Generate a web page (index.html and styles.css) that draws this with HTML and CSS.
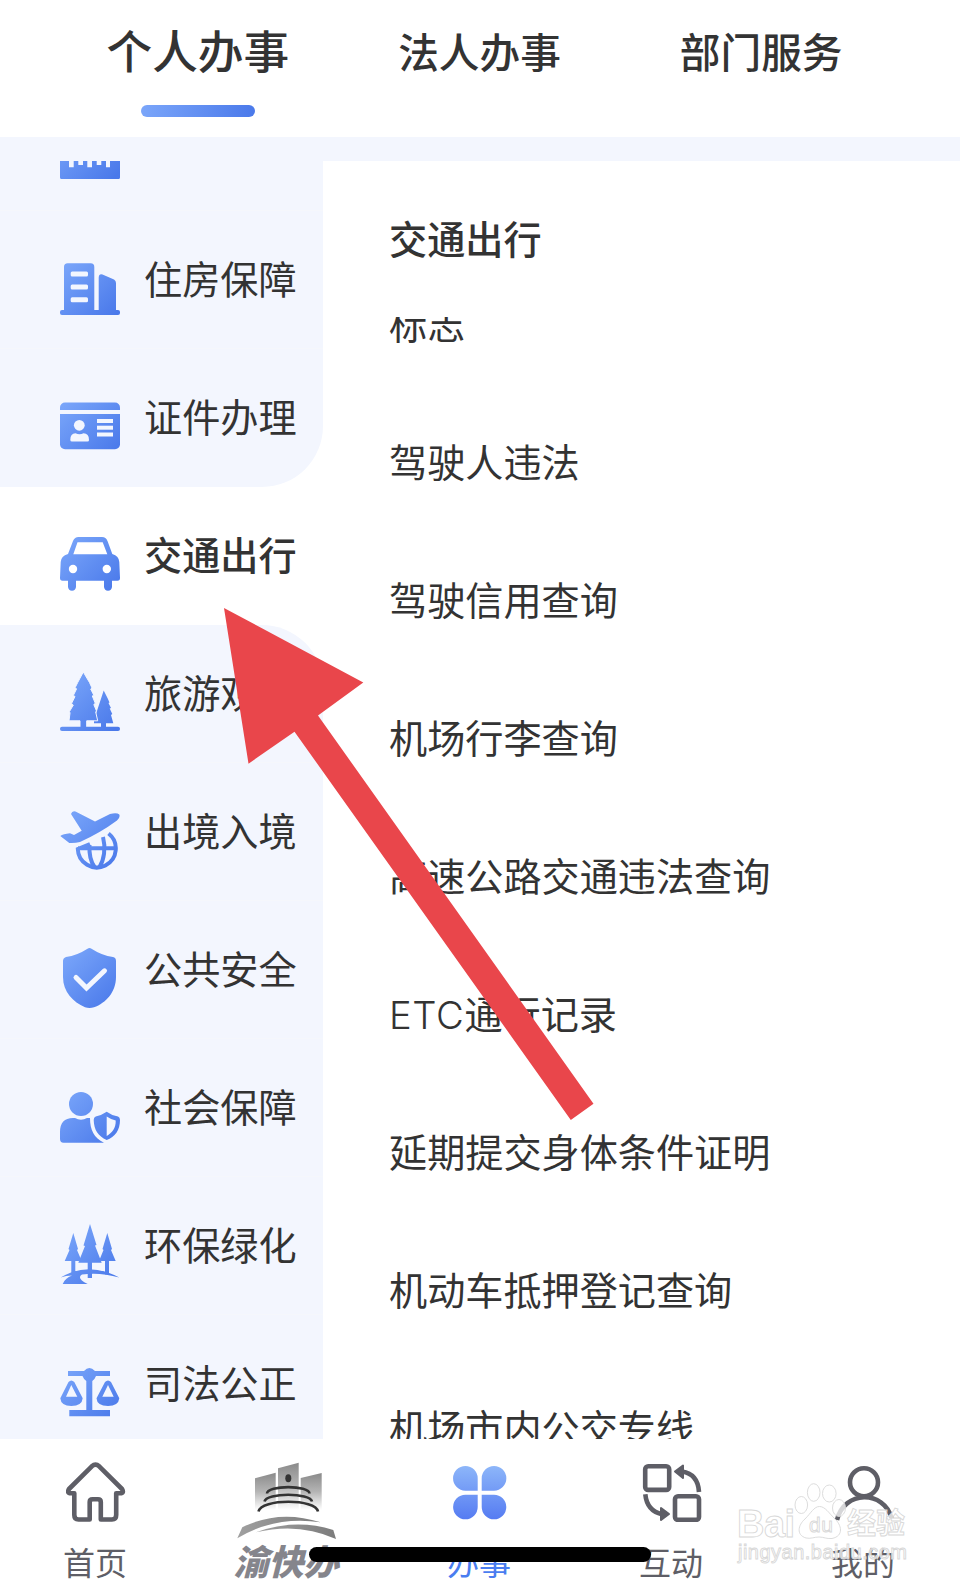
FILE: index.html
```html
<!DOCTYPE html>
<html lang="zh-CN">
<head>
    <meta charset="utf-8">
    <meta name="viewport" content="width=device-width, initial-scale=1">
    <title>办事</title>
    <link rel="stylesheet" href="styles.css">
</head>
<body>
    <svg class="defs" width="0" height="0">
        <defs>
            <linearGradient id="blue" gradientUnits="userSpaceOnUse" x1="4" y1="4" x2="56" y2="56">
                <stop offset="0" stop-color="#7aa6fa"/>
                <stop offset="1" stop-color="#4a79ea"/>
            </linearGradient>
            <linearGradient id="petal" gradientUnits="userSpaceOnUse" x1="0" y1="4" x2="0" y2="57">
                <stop offset="0" stop-color="#8db6f9"/>
                <stop offset="1" stop-color="#567cf2"/>
            </linearGradient>
            <linearGradient id="tower" x1="0" y1="0" x2="0" y2="1">
                <stop offset="0" stop-color="#8a8a8a"/>
                <stop offset="0.5" stop-color="#b4b4b4"/>
                <stop offset="1" stop-color="#ffffff"/>
            </linearGradient>
            <linearGradient id="swoosh" x1="0" y1="0" x2="1" y2="0">
                <stop offset="0" stop-color="#a0a0a0"/>
                <stop offset="1" stop-color="#7c7c7c"/>
            </linearGradient>
        </defs>
    </svg>

    <header class="tabs">
        <div class="tab active">个人办事</div>
        <div class="tab">法人办事</div>
        <div class="tab">部门服务</div>
    </header>

    <main class="main">
        <nav class="side">
            <div class="cat">
                <svg class="cat-icon" viewBox="0 0 60 60" fill="url(#blue)">
                    <path d="M0 22H60V57.500Q60 59 58.500 59H1.500Q0 59 0 57.500ZM9 30V47.300H13.700V30ZM18.300 30V45H23V30ZM27.300 30V47.300H32V30ZM36.700 30V45H41.300V30ZM46 30V47.300H50V30Z" fill-rule="evenodd"/>
                </svg>
                <span></span>
            </div>
            <div class="cat">
                <svg class="cat-icon" viewBox="0 0 60 60" fill="url(#blue)">
                    <path d="M4 52V9Q4 5.300 7.700 5.300H30.700Q34.300 5.300 34.300 9V52ZM38.700 52V19.500Q39 15.300 42.500 16.400L54 21.500Q56 22.500 56 25V52Z"/>
                    <rect x="0" y="52" width="60" height="5" rx="2"/>
                    <g class="hole">
                        <rect x="10.700" y="13.500" width="17.300" height="5" rx="1.500"/>
                        <rect x="10.700" y="26.400" width="17.300" height="5" rx="1.500"/>
                        <rect x="10.700" y="39.200" width="17.300" height="5" rx="1.500"/>
                    </g>
                </svg>
                <span>住房保障</span>
            </div>
            <div class="cat before">
                <svg class="cat-icon" viewBox="0 0 60 60" fill="url(#blue)">
                    <rect x="0" y="6.500" width="60" height="46.700" rx="5"/>
                    <g class="hole">
                        <rect x="0" y="14" width="60" height="4"/>
                        <circle cx="19.300" cy="29.300" r="5.400"/>
                        <path d="M10.300 44Q10.300 37.300 15.500 37.300Q19.500 39.300 23.500 37.300Q29 37.300 29 44Q29 45.500 27.500 45.500H12Q10.300 45.500 10.300 44Z"/>
                        <rect x="37" y="23" width="16" height="4"/>
                        <rect x="37" y="29.700" width="16" height="4"/>
                        <rect x="37" y="36.500" width="16" height="4"/>
                    </g>
                </svg>
                <span>证件办理</span>
            </div>
            <div class="cat current">
                <svg class="cat-icon" viewBox="0 0 60 60" fill="url(#blue)">
                    <path fill-rule="evenodd" d="M8 20L13 7Q14.700 3 18.500 3H42Q46 3 47.500 7L52.300 20Q59 22 59.300 28L60 44Q60 46.700 57.500 46.700H52V53Q51.500 56.700 48 56.700Q44.500 56.700 44 53V46.700H16V53Q15.500 56.700 12 56.700Q8.500 56.700 8 53V46.700H2.500Q0 46.700 0 44L.7 28Q1 22 8 20ZM17.500 8.300L13.300 20.300H47.300L42.700 8.300Z"/>
                    <g class="hole">
                        <circle cx="13" cy="35" r="4.200"/>
                        <circle cx="46.800" cy="35" r="4.200"/>
                    </g>
                </svg>
                <span>交通出行</span>
            </div>
            <div class="cat after">
                <svg class="cat-icon" viewBox="0 0 60 60" fill="url(#blue)">
                    <path d="M43.700 18.500L47.500 26L49.500 30.500L48.500 31L51 36L49.700 36.500L52.300 42L51 43L53.300 51.300H46V56H41V51.300H34V48Z"/>
                    <path class="gap" d="M23.300 0L29.500 10.500L32 16L30.700 17L33.700 23L32.300 24L35.300 31.300L33.800 32.500L36.500 39L35.700 40L37.700 48.800H26.700V56H20V48.800H9L10 41L9.500 39.500L13.300 33L11.500 31.500L15 24.500L13.300 23.500L16.500 17L15.200 15.500L17.700 10.500Z"/>
                    <rect x="0" y="54.700" width="60" height="4.300" rx="2"/>
                </svg>
                <span>旅游观光</span>
            </div>
            <div class="cat">
                <svg class="cat-icon" viewBox="0 0 60 60" fill="url(#blue)">
                    <path d="M11 4Q12 .5 15.500 1.500L35 11.500L50 4Q57 2.500 59.300 4.500Q60.500 7.500 57 10.500Q40 23 20 32Q15 33.300 9.300 33L.3 26Q3 24 10 23.300L14 25L21.700 20.700Z"/>
                    <g fill="none" stroke="url(#blue)" stroke-width="4">
                        <path d="M48.500 23.500A19 19 0 1 1 17.800 39L30 34M18 38.300H56"/>
                        <path d="M29.500 35C29 44 31 52 34.500 57M43 27C46 38 44 50 39.500 57"/>
                    </g>
                </svg>
                <span>出境入境</span>
            </div>
            <div class="cat">
                <svg class="cat-icon" viewBox="0 0 60 60" fill="url(#blue)">
                    <path d="M27.500 .7Q29.500-.5 31.500 .7Q42 7.500 53 9Q56 9.700 56 13V29C56 44 46 55 34 59.300Q29.500 60.700 25 59.300C13 54 3 44 3 29V13Q3 10 6 9Q17 7.500 27.500 .7Z"/>
                    <path class="tick" d="M16 29.500L26.500 40L44.500 22.800"/>
                </svg>
                <span>公共安全</span>
            </div>
            <div class="cat">
                <svg class="cat-icon" viewBox="0 0 60 60" fill="url(#blue)">
                    <circle cx="21" cy="18" r="12"/>
                    <path d="M0 46Q0 32 13 32H15Q21 35.500 27 32H30C30 44 34 52 44 56.700H3.500Q0 56.700 0 53Z"/>
                    <path fill-rule="evenodd" d="M46.700 25.700Q51 29 58 30.500Q60 31 60 34C60 44 55 51 46.700 54C38 50 34 44 33.700 34Q33.700 31 35.700 30.500Q42 29 46.700 25.700ZM46.700 30.500V50C52 47 56 42 55.700 34.500Q51 33.500 46.700 30.500Z"/>
                </svg>
                <span>社会保障</span>
            </div>
            <div class="cat">
                <svg class="cat-icon" viewBox="0 0 60 60" fill="url(#blue)">
                    <path d="M30 0L36.500 21L35 21.500L41.700 38.700H32V54H27.700V38.700H18.300L25 22L23.500 21.500Z"/>
                    <path d="M13.300 9L18 25L17 26L21.700 37H15.300V50H11.300V37H4.700L9.500 26L8.500 25Z"/>
                    <path d="M47.300 9L52 25L51 26L55.700 37H49V50.500H45V37H39L43.500 26L42.500 25Z"/>
                    <path d="M.7 53.500Q28 37 59.300 53.500Q40 48 22 50.500Q16 54 27.700 60H2.700Q5 54 12 51.500Q6 51.500 .7 53.500Z"/>
                </svg>
                <span>环保绿化</span>
            </div>
            <div class="cat">
                <svg class="cat-icon" viewBox="0 0 60 60" fill="url(#blue)">
                    <path d="M8 9H24Q29.300 3 35 9H50V14H36Q35 17 32.300 19V48H50V54.300H9.300V48H26.300V19Q23.500 17 22.500 14H8Z"/>
                    <path fill-rule="evenodd" d="M8.500 20Q11.300 17 14.300 20L22.700 36.300Q22 44 11.300 44Q1 44 .3 36.300ZM11.300 23L6 34.700H17.300Z"/>
                    <path fill-rule="evenodd" d="M45 20Q48 17 51 20L59.300 36.300Q58.500 44 48 44Q37 44 36.500 36.300ZM48 23L42.300 34.700H53.700Z"/>
                </svg>
                <span>司法公正</span>
            </div>
        </nav>

        <section class="content">
            <h2>交通出行</h2>
            <div class="list">
                <ul>
                    <li>标志</li>
                    <li>驾驶人违法</li>
                    <li>驾驶信用查询</li>
                    <li>机场行李查询</li>
                    <li>高速公路交通违法查询</li>
                    <li><span class="latin">ETC</span>通行记录</li>
                    <li>延期提交身体条件证明</li>
                    <li>机动车抵押登记查询</li>
                    <li>机场市内公交专线</li>
                </ul>
            </div>
        </section>
    </main>

    <footer class="bar">
        <div class="bar-item">
            <svg width="60" height="60" viewBox="0 0 60 60" class="line">
                <path d="M25.800 4.300Q29.500 1 33.200 4.300L56 27Q58.500 31.300 54 31.300H50.200V53Q50.200 57.500 46 57.500H34.800V40Q34.800 37.300 32 37.300H26.500Q23.700 37.300 23.700 40V57.500H12.500Q8.300 57.500 8.300 53V31.300H5Q.5 31.300 3 27Z"/>
            </svg>
            <span>首页</span>
        </div>
        <div class="bar-item brand">
            <svg width="100" height="78" viewBox="0 0 100 78">
                <path fill="url(#tower)" d="M18 16.300L38.700 10.700V48H18Z"/>
                <path fill="url(#tower)" d="M41 6.300L61.700 .7V48H41Z"/>
                <path fill="url(#tower)" d="M63.700 16L84.700 11V48H63.700Z"/>
                <ellipse cx="51.300" cy="16.300" rx="3" ry="4" fill="#333"/>
                <g fill="none" stroke="#333" stroke-width="2.600">
                    <path d="M30 31.500C30 23 72.500 23 72.500 31.500"/>
                    <path d="M27.500 39.500C29 30.500 73.500 30.500 75 39.500"/>
                    <path d="M21.500 49.500C24 36.500 79 36.500 81 49.500"/>
                </g>
                <path fill="url(#swoosh)" d="M.3 76.300L5.300 65.300Q42 47 83.700 60.300Q38 53.500 .3 76.300Z"/>
                <path fill="url(#swoosh)" d="M19 70.300Q58 56 96.300 68L99 77Q62 60 19 70.300Z"/>
            </svg>
            <span>渝快办</span>
        </div>
        <div class="bar-item on">
            <svg width="60" height="60" viewBox="0 0 60 60" fill="url(#petal)">
                <path d="M15.400 4A12.300 12.300 0 0 1 27.700 16.300V28.700H15.400A12.300 12.300 0 0 1 15.400 4Z"/>
                <path d="M44 4A12.300 12.300 0 0 1 44 28.700H31.700V16.300A12.300 12.300 0 0 1 44 4Z"/>
                <path d="M15.400 32.700H27.700V45A12.300 12.300 0 1 1 15.400 32.700Z"/>
                <path d="M31.700 32.700H44A12.300 12.300 0 1 1 31.700 45Z"/>
            </svg>
            <span>办事</span>
        </div>
        <div class="bar-item">
            <svg width="60" height="60" viewBox="0 0 60 60" class="line">
                <rect x="3.200" y="4.200" width="24" height="23.700" rx="3"/>
                <rect x="33" y="34.200" width="24" height="23.700" rx="3"/>
                <path d="M40 9.500Q56 12 57 30M3.300 32.300Q5 49 20 52.300"/>
                <path class="solid" d="M33 9.500L41 3.500V16ZM27 52L19 46V58Z"/>
            </svg>
            <span>互动</span>
        </div>
        <div class="bar-item">
            <svg width="60" height="60" viewBox="0 0 60 60" class="line">
                <circle cx="30" cy="20.300" r="14"/>
                <path d="M3 58C10 28 50 28 57.500 56"/>
            </svg>
            <span>我的</span>
        </div>
        <div class="home-indicator"></div>
    </footer>

    <svg class="arrow" width="370" height="512" viewBox="224 608 370 512">
        <polygon points="224,608 363.300,682.500 318,715.500 593.500,1103.700 570.800,1120 294.500,731.700 248.500,763.700"/>
    </svg>

    <svg class="watermark" width="180" height="90" viewBox="0 0 180 90">
        <ellipse cx="67.300" cy="25" rx="6.300" ry="8.500"/>
        <ellipse cx="79.700" cy="12.500" rx="6.300" ry="8.800"/>
        <ellipse cx="95.300" cy="13.500" rx="6.800" ry="8.500"/>
        <ellipse cx="105" cy="28" rx="6.500" ry="8.500"/>
        <path d="M85.500 26.500C91 26.500 95 33 100 38C108 45 110 56 98 58.500C92 59 90 57 85 57C80 57 77 59 72 58C62 55 64 45 71 39C77 33 80 26.500 85.500 26.500Z"/>
        <text x="3" y="56.500" font-size="38" font-weight="bold" textLength="58">Bai</text>
        <text x="75" y="52" font-size="21" textLength="24">du</text>
        <text class="cn" x="113" y="53.500" font-size="29" font-weight="bold">经验</text>
        <text x="4" y="79" font-size="20" textLength="169">jingyan.baidu.com</text>
    </svg>
</body>
</html>
```
FILE: styles.css
```css
* {
  box-sizing: border-box;
}
body {
  margin: 0;
  width: 960px;
  height: 1586px;
  position: relative;
  overflow: hidden;
  display: flex;
  flex-direction: column;
  background: #fff;
  color: #333;
  font-family: "Noto Sans CJK SC", sans-serif;
}
.defs {
  position: absolute;
}

/* top tabs */
.tabs {
  flex: 0 0 137px;
  display: flex;
  padding: 0 58px 0 57px;
}
.tab {
  flex: 1;
  height: 117px;
  line-height: 102px;
  text-align: center;
  white-space: nowrap;
  font-size: 40.7px;
  font-weight: 500;
}
.tab.active {
  display: flex;
  flex-direction: column;
  align-items: center;
  font-size: 45.7px;
  line-height: 99px;
}
.tab.active::after {
  content: "";
  width: 114px;
  height: 12px;
  margin-top: 6px;
  margin-left: 1px;
  border-radius: 6px;
  background: linear-gradient(100deg, #7ba6fa, #4a79ea);
}

.main {
  flex: 0 0 1302px;
  display: flex;
  overflow: hidden;
  border-top: 24px solid #f3f6fe;
}

/* categories */
.side {
  width: 323px;
}
.cat {
  display: flex;
  align-items: center;
  gap: 24px;
  height: 138px;
  padding: 0 0 3px 60px;
  background: #f3f6fe;
  border-bottom: 1px solid #f5f7fc;
  font-size: 38.15px;
  line-height: 56px;
  white-space: nowrap;
}
.cat:first-child {
  margin-top: -88.5px;
}
.cat.before {
  border-bottom: 0;
  border-bottom-right-radius: 61px;
}
.cat.current {
  background: #fff;
  border-bottom: 0;
  font-weight: 500;
}
.cat.after {
  border-top-right-radius: 61px;
}
.cat-icon {
  flex: none;
  width: 60px;
  height: 60px;
  margin-top: 20px;
}
.hole {
  fill: #f3f6fe;
}
.current .hole {
  fill: #fff;
}
.gap {
  stroke: #f3f6fe;
  stroke-width: 1;
}
.tick {
  fill: none;
  stroke: #f3f6fe;
  stroke-width: 5;
  stroke-linecap: round;
}

/* services */
.content {
  flex: 1;
  padding-left: 66px;
}
h2 {
  margin: 0;
  height: 156px;
  font-size: 38.15px;
  line-height: 154px;
  font-weight: 500;
}
.list {
  height: 1122px;
  overflow: hidden;
}
ul {
  list-style: none;
  margin: -61px 0 0;
  padding: 0;
}
li {
  height: 138px;
  line-height: 134px;
  font-size: 38.15px;
}
.latin {
  font-family: Inter, sans-serif;
  font-weight: 300;
  letter-spacing: 0.6px;
  line-height: 1;
}

/* bottom bar */
.bar {
  flex: 1;
  position: relative;
  display: flex;
  background: #fff;
}
.bar-item {
  flex: 1;
  display: flex;
  flex-direction: column;
  align-items: center;
  padding-top: 23px;
  font-size: 32px;
  line-height: 48px;
  color: #5e5e66;
}
.bar-item span {
  margin: 15px 2px 0 0;
}
.brand svg {
  margin-right: 2px;
}
.brand span {
  margin: -4px 4px 0 0;
  font-size: 35px;
  font-weight: 900;
  font-style: italic;
  color: #85858c;
}
.on {
  color: #4a7df0;
}
.line {
  fill: none;
  stroke: #5e5e66;
  stroke-width: 4.6;
  stroke-linejoin: round;
}
.solid {
  fill: #5e5e66;
  stroke-width: 2;
}
.home-indicator {
  position: absolute;
  left: 309px;
  top: 108px;
  width: 342px;
  height: 15px;
  border-radius: 8px;
  background: #000;
}

.arrow {
  position: absolute;
  left: 224px;
  top: 608px;
  fill: #e9464b;
}
.watermark {
  position: absolute;
  left: 734px;
  top: 1480px;
  fill: rgba(255, 255, 255, 0.75);
  stroke: #d8d8d8;
  stroke-width: 0.9;
  font-family: "Liberation Sans", sans-serif;
}
.cn {
  font-family: "Noto Sans CJK SC", sans-serif;
}
```
